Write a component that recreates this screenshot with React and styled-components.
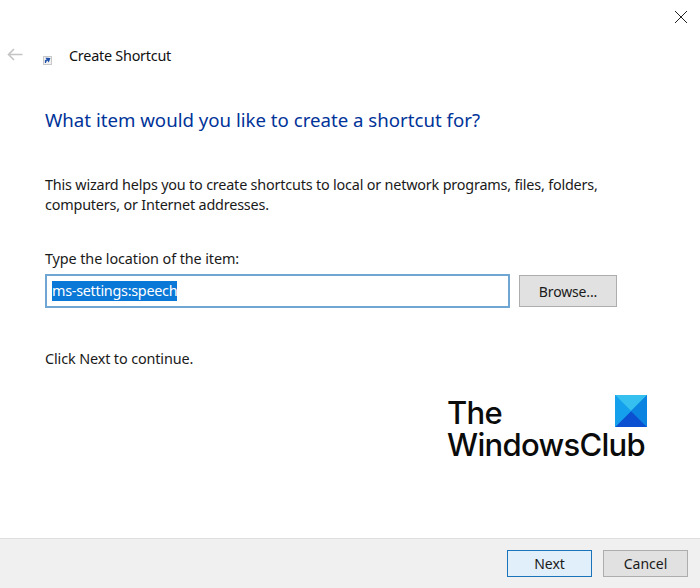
import React from "react";
import styled, { createGlobalStyle } from "styled-components";

const Global = createGlobalStyle`
  html, body { margin: 0; padding: 0; background: #fff; }
  body { font-family: "Noto Sans", "Open Sans", sans-serif; color: #1a1a1a; }
`;
const Window = styled.div`
  width: 700px; height: 588px; display: flex; flex-direction: column; overflow: hidden; background: #fff;
`;
const CloseRow = styled.div`
  height: 40px; display: flex; justify-content: flex-end; align-items: flex-start; padding: 10px 12px 0 0; box-sizing: border-box;
`;
const Header = styled.div`
  height: 32px; display: flex; align-items: center; padding-left: 7px;
`;
const Back = styled.div`
  width: 36px; display: flex; align-items: center; padding-bottom: 3px;
`;
const SmallIcon = styled.div`
  width: 26px; display: flex; padding-top: 9px;
`;
const Title = styled.div`
  font-size: 14.4px; letter-spacing: -0.24px; color: #111; line-height: 20px; margin-top: -1px;
`;
const Main = styled.div`
  flex: 1; padding-left: 45px; display: flex; flex-direction: column;
`;
const Heading = styled.h1`
  margin: 34px 0 0; font-weight: 400; font-size: 18.65px; line-height: 28px; color: #003399;
`;
const Para = styled.p`
  margin: 41px 0 0; font-size: 14.4px; line-height: 19.5px; letter-spacing: -0.19px; color: #1a1a1a; width: 600px;
`;
const Label = styled.div`
  margin-top: 35px; font-size: 14.4px; line-height: 20px; letter-spacing: -0.1px;
`;
const InputRow = styled.div`
  display: flex; align-items: center; gap: 9px; margin-top: 5px;
`;
const InputBox = styled.div`
  width: 465px; height: 34px; box-sizing: border-box; border: 2px solid #6fa6d4; display: flex; align-items: center; padding-left: 5px;
`;
const Selected = styled.span`
  background: #0a78d7; color: #fff; font-size: 14.4px; line-height: 20px; letter-spacing: -0.28px; display: block;
`;
const Btn = styled.div`
  width: 85px; height: 27px; box-sizing: border-box; display: flex; align-items: center; justify-content: center;
  font-size: 14px; color: #1a1a1a;
  background: ${p => (p.$primary ? "#e1effa" : "#e1e1e1")};
  border: ${p => (p.$primary ? "1.5px solid #1b74ba" : "1.5px solid #adadad")};
`;
const BrowseBtn = styled(Btn)`
  width: 98px; height: 32px; letter-spacing: -0.15px;
`;
const Hint = styled.div`
  margin-top: 41px; font-size: 14.4px; line-height: 20px; letter-spacing: -0.12px;
`;
const LogoRow = styled.div`
  margin-top: 26px; padding-right: 53px; display: flex; justify-content: flex-end;
`;
const Logo = styled.div`
  position: relative; width: 200px; height: 66px; padding-top: 2px; box-sizing: border-box;
`;
const LogoLine = styled.div`
  font-family: Inter, Lato, sans-serif; font-weight: 500; font-size: 31px; line-height: 32px; color: #0b0b0b; letter-spacing: -0.7px; white-space: nowrap; width: fit-content;
`;
const LogoMark = styled.svg`
  position: absolute; right: 0; top: 0;
`;
const Footer = styled.div`
  height: 49px; background: #f0f0f0; border-top: 1px solid #dfdfdf; display: flex; justify-content: flex-end; align-items: center; gap: 11px; padding: 0 12px 0 0;
`;

export default function App() {
  return (
    <Window>
      <Global />
      <CloseRow>
        <svg width="14" height="14" viewBox="0 0 14 14"><path d="M1 1 L13 13 M13 1 L1 13" stroke="#222" strokeWidth="1" fill="none" /></svg>
      </CloseRow>
      <Header>
        <Back>
          <svg width="16" height="13" viewBox="0 0 16 13"><path d="M15.5 6.5 H1.5 M7 1 L1.5 6.5 L7 12" stroke="#c4c4c4" strokeWidth="1.6" fill="none" /></svg>
        </Back>
        <SmallIcon>
          <svg width="9" height="9" viewBox="0 0 9 9">
            <rect x="0.5" y="0.5" width="8" height="8" fill="#f2f2f2" stroke="#c8c8c8" />
            <path d="M2.5 7 V4.5 L5 3.2 M3.6 2.4 L6.6 2.6 L5.6 5.2 Z" stroke="#1d4fa8" strokeWidth="1.2" fill="#1d4fa8" />
          </svg>
        </SmallIcon>
        <Title>Create Shortcut</Title>
      </Header>
      <Main>
        <Heading>What item would you like to create a shortcut for?</Heading>
        <Para>This wizard helps you to create shortcuts to local or network programs, files, folders, computers, or Internet addresses.</Para>
        <Label>Type the location of the item:</Label>
        <InputRow>
          <InputBox><Selected>ms-settings:speech</Selected></InputBox>
          <BrowseBtn>Browse...</BrowseBtn>
        </InputRow>
        <Hint>Click Next to continue.</Hint>
        <LogoRow>
          <Logo>
            <LogoLine>The</LogoLine>
            <LogoLine>WindowsClub</LogoLine>
            <LogoMark width="32" height="32" viewBox="0 0 32 32">
              <rect width="32" height="32" fill="#1aa3e8" />
              <path d="M0 0 H32 L16 16 Z" fill="#35c0f0" />
              <path d="M32 0 V32 L16 16 Z" fill="#0a84e0" />
              <path d="M0 32 H32 L16 16 Z" fill="#0a50d0" />
              <path d="M0 0 V32 L16 16 Z" fill="#14a0ec" />
            </LogoMark>
          </Logo>
        </LogoRow>
      </Main>
      <Footer>
        <Btn $primary>Next</Btn>
        <Btn>Cancel</Btn>
      </Footer>
    </Window>
  );
}
